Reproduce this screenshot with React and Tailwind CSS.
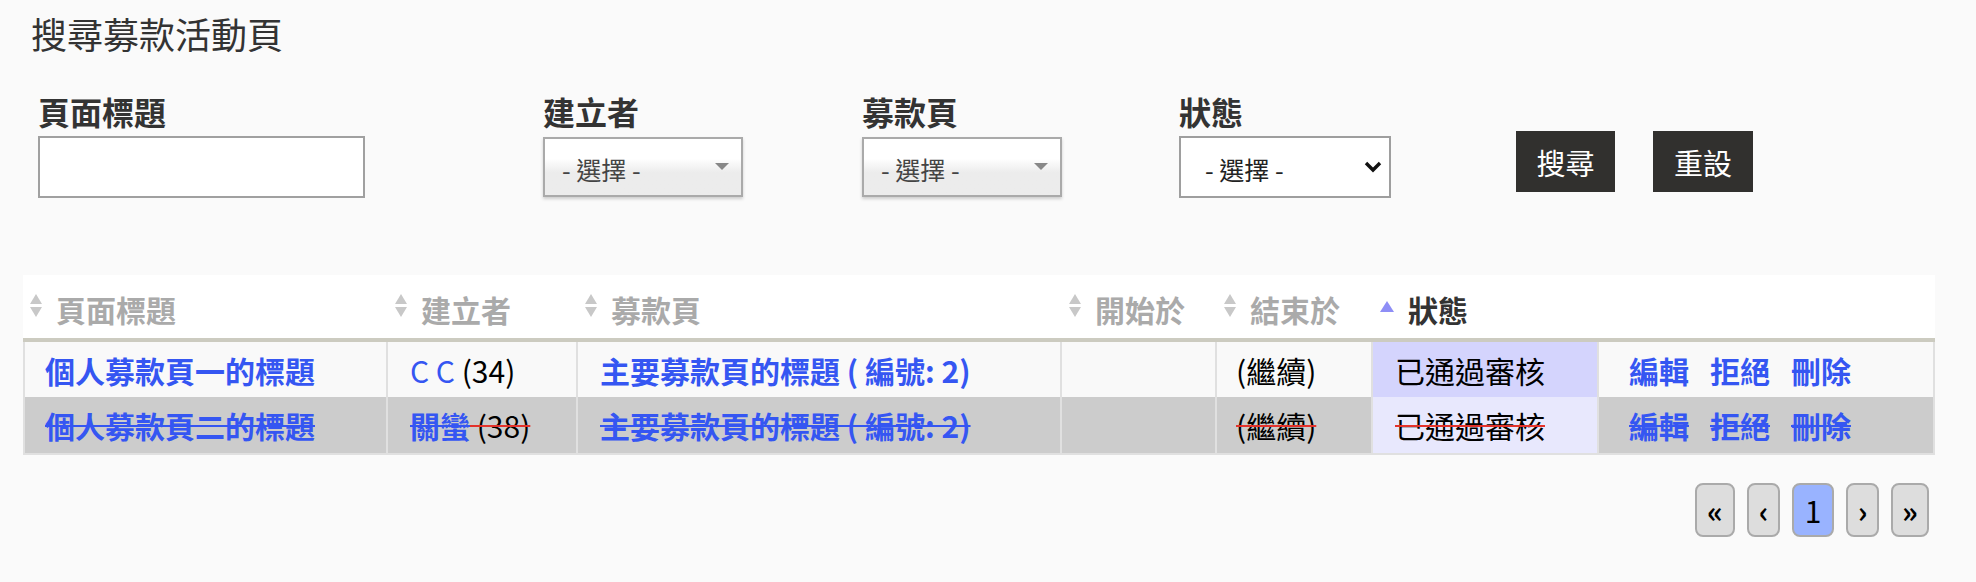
import React from "react";

const FONT = "font-['Noto_Sans_CJK_TC','Noto_Sans',sans-serif]";

function SortIcon() {
  return (
    <svg width="12" height="24" viewBox="0 0 12 24" className="block shrink-0 -mt-[6px]">
      <polygon points="0,10 6,0 12,10" fill="#c8c8c8" />
      <polygon points="0,13 6,23 12,13" fill="#c8c8c8" />
    </svg>
  );
}

function ActiveSortIcon() {
  return (
    <svg width="14" height="11" viewBox="0 0 14 11" className="block shrink-0 -mt-[4px]">
      <polygon points="0,11 7,0 14,11" fill="#8e8ef6" />
    </svg>
  );
}

function ChosenSelect() {
  return (
    <div className="relative flex h-[60px] w-[200px] items-center border-2 border-[#aaaaaa] bg-linear-to-b from-white from-35% to-[#ececec] to-60% pl-[17px] shadow-[0_2px_3px_rgba(0,0,0,0.18)]">
      <span className="pt-[4px] text-[25px] leading-[25px] text-[#444]">- 選擇 -</span>
      <svg width="14" height="7" viewBox="0 0 14 7" className="absolute right-[12px] top-[24px]">
        <polygon points="0,0 14,0 7,7" fill="#888" />
      </svg>
    </div>
  );
}

function NativeSelect() {
  return (
    <div className="relative flex h-[62px] w-[212px] items-center border-2 border-[#9e9e9e] bg-white pl-[24px]">
      <span className="pt-[4px] text-[25px] leading-[25px] text-[#222]">- 選擇 -</span>
      <svg width="18" height="12" viewBox="0 0 18 12" className="absolute right-[7px] top-[23px]">
        <polyline points="2,2 9,9 16,2" fill="none" stroke="#111" strokeWidth="3.4" />
      </svg>
    </div>
  );
}

const linkCls = "font-bold text-[#3556f2]";
const strikeRed = "line-through decoration-[#e3322b] decoration-2";
const strikeBlue = "line-through decoration-[#3556f2] decoration-2";

export default function App() {
  const headers = [
    { t: "頁面標題" },
    { t: "建立者" },
    { t: "募款頁" },
    { t: "開始於" },
    { t: "結束於" },
    { t: "狀態", active: true },
    { t: "" },
  ];

  const td = "border-r-2 border-b-0 border-[#e0e0e0] align-middle text-[30px] leading-[30px]";

  return (
    <div className={`min-h-[582px] w-[1976px] bg-[#fafafa] ${FONT}`}>
      <h1 className="pl-[31px] pt-[15px] text-[36px] leading-[36px] font-normal text-[#333]">
        搜尋募款活動頁
      </h1>

      <div className="mt-[44px] flex items-start pl-[38px]">
        <div className="w-[505px]">
          <div className="text-[32px] leading-[32px] font-bold text-[#333]">頁面標題</div>
          <div className="mt-[9px] h-[62px] w-[327px] border-2 border-[#a0a0a0] bg-white" />
        </div>
        <div className="w-[319px]">
          <div className="text-[32px] leading-[32px] font-bold text-[#333]">建立者</div>
          <div className="mt-[10px]">
            <ChosenSelect />
          </div>
        </div>
        <div className="w-[317px]">
          <div className="text-[32px] leading-[32px] font-bold text-[#333]">募款頁</div>
          <div className="mt-[10px]">
            <ChosenSelect />
          </div>
        </div>
        <div className="w-[337px]">
          <div className="text-[32px] leading-[32px] font-bold text-[#333]">狀態</div>
          <div className="mt-[9px]">
            <NativeSelect />
          </div>
        </div>
        <div className="mt-[36px] flex gap-[38px]">
          <button className="flex h-[61px] w-[99px] items-center justify-center bg-[#31302e] pt-[2px] text-[29px] leading-[29px] text-white">
            搜尋
          </button>
          <button className="flex h-[61px] w-[100px] items-center justify-center bg-[#31302e] pt-[2px] text-[29px] leading-[29px] text-white">
            重設
          </button>
        </div>
      </div>

      <table className="ml-[23px] mt-[77px] w-[1912px] table-fixed border-separate border-spacing-0">
        <colgroup>
          <col className="w-[365px]" />
          <col className="w-[190px]" />
          <col className="w-[484px]" />
          <col className="w-[155px]" />
          <col className="w-[156px]" />
          <col className="w-[226px]" />
          <col className="w-[336px]" />
        </colgroup>
        <thead>
          <tr className="bg-white">
            {headers.map((h, i) => (
              <th
                key={i}
                className="h-[67px] border-b-4 border-[#cccbc0] pl-[7px] pt-[4px] text-left align-middle"
              >
                {h.t && (
                  <div className="flex items-center gap-[14px]">
                    {h.active ? <ActiveSortIcon /> : <SortIcon />}
                    <span
                      className={`text-[30px] leading-[30px] font-bold ${
                        h.active ? "text-[#333]" : "text-[#aaaaaa]"
                      }`}
                    >
                      {h.t}
                    </span>
                  </div>
                )}
              </th>
            ))}
          </tr>
        </thead>
        <tbody>
          <tr className="h-[55px] bg-[#f9f9f9]">
            <td className={`${td} border-l-2 pl-[20px]`}>
              <a className={linkCls}>個人募款頁一的標題</a>
            </td>
            <td className={`${td} pl-[22px]`}>
              <a className="font-normal text-[#3556f2]">C C</a>
              <span className="text-black"> (34)</span>
            </td>
            <td className={`${td} pl-[22px]`}>
              <a className={linkCls}>主要募款頁的標題 ( 編號: 2)</a>
            </td>
            <td className={td}></td>
            <td className={`${td} pl-[19px] text-black`}>(繼續)</td>
            <td className={`${td} bg-[#d4d4fd] pl-[22px] text-black`}>已通過審核</td>
            <td className={`${td} pl-[30px]`}>
              <span className="flex gap-[21px]">
                <a className={linkCls}>編輯</a>
                <a className={linkCls}>拒絕</a>
                <a className={linkCls}>刪除</a>
              </span>
            </td>
          </tr>
          <tr className="h-[58px] bg-[#cccccc]">
            <td className={`${td} border-b-2 border-l-2 pl-[20px]`}>
              <a className={`${linkCls} ${strikeBlue}`}>個人募款頁二的標題</a>
            </td>
            <td className={`${td} border-b-2 pl-[22px]`}>
              <a className={`${linkCls} ${strikeBlue}`}>關蠻</a>
              <span className={`text-black ${strikeRed}`}> (38)</span>
            </td>
            <td className={`${td} border-b-2 pl-[22px]`}>
              <a className={`${linkCls} ${strikeBlue}`}>主要募款頁的標題 ( 編號: 2)</a>
            </td>
            <td className={`${td} border-b-2`}></td>
            <td className={`${td} border-b-2 pl-[19px]`}>
              <span className={`text-black ${strikeRed}`}>(繼續)</span>
            </td>
            <td className={`${td} border-b-2 bg-[#e8e8fd] pl-[22px]`}>
              <span className={`text-black ${strikeRed}`}>已通過審核</span>
            </td>
            <td className={`${td} border-b-2 pl-[30px]`}>
              <span className="flex gap-[21px]">
                <a className={`${linkCls} ${strikeBlue}`}>編輯</a>
                <a className={`${linkCls} ${strikeBlue}`}>拒絕</a>
                <a className={`${linkCls} ${strikeBlue}`}>刪除</a>
              </span>
            </td>
          </tr>
        </tbody>
      </table>

      <div className="ml-[23px] mt-[28px] flex w-[1912px] justify-end gap-[12px] pr-[6px]">
        <button className="flex h-[54px] w-[40px] items-center justify-center rounded-[8px] border-2 border-[#aaaaaa] bg-[#dddddd] text-[30px] leading-[30px] font-bold text-black">
          «
        </button>
        <button className="flex h-[54px] w-[33px] items-center justify-center rounded-[8px] border-2 border-[#aaaaaa] bg-[#dddddd] text-[30px] leading-[30px] font-bold text-black">
          ‹
        </button>
        <button className="flex h-[54px] w-[42px] items-center justify-center rounded-[8px] border-2 border-[#aaaaaa] bg-[#99b3ff] text-[30px] leading-[30px] font-normal text-black">
          1
        </button>
        <button className="flex h-[54px] w-[33px] items-center justify-center rounded-[8px] border-2 border-[#aaaaaa] bg-[#dddddd] text-[30px] leading-[30px] font-bold text-black">
          ›
        </button>
        <button className="flex h-[54px] w-[38px] items-center justify-center rounded-[8px] border-2 border-[#aaaaaa] bg-[#dddddd] text-[30px] leading-[30px] font-bold text-black">
          »
        </button>
      </div>
    </div>
  );
}
